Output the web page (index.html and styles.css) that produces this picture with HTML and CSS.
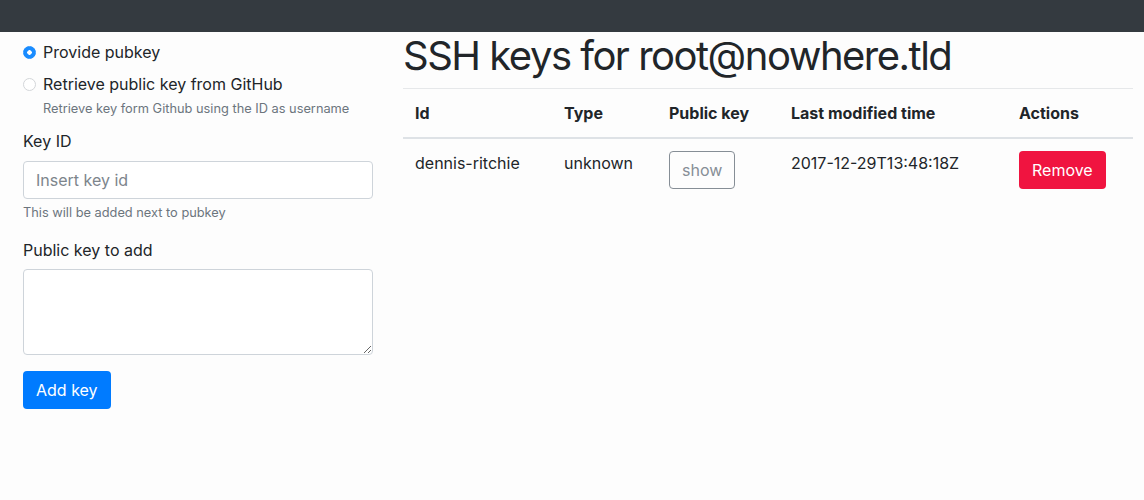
FILE: index.html
```html
<!DOCTYPE html>
<html lang="en">
<head>
    <meta charset="UTF-8">
    <meta name="viewport" content="width=device-width, initial-scale=1.0">
    <title>SSH keys for root@nowhere.tld</title>
    <link rel="stylesheet" href="styles.css">
</head>
<body>
    <nav class="topbar"></nav>

    <div class="page">
        <form class="key-form">
            <div class="radio-group">
                <label class="radio-row">
                    <input type="radio" name="source" value="pubkey" checked>
                    <span>Provide pubkey</span>
                </label>
                <label class="radio-row">
                    <input type="radio" name="source" value="github">
                    <span>Retrieve public key from GitHub</span>
                </label>
                <small class="help radio-help">Retrieve key form Github using the ID as username</small>
            </div>

            <div class="form-group">
                <label class="field-label" for="key-id">Key ID</label>
                <input class="field" type="text" id="key-id" placeholder="Insert key id">
                <small class="help">This will be added next to pubkey</small>
            </div>

            <div class="form-group">
                <label class="field-label" for="pubkey">Public key to add</label>
                <textarea class="field field-area" id="pubkey"></textarea>
            </div>

            <button type="button" class="btn btn-primary">Add key</button>
        </form>

        <main class="keys">
            <h1>SSH keys for root@nowhere.tld</h1>
            <table class="keys-table">
                <colgroup>
                    <col class="col-id">
                    <col class="col-type">
                    <col class="col-key">
                    <col class="col-time">
                    <col class="col-actions">
                </colgroup>
                <thead>
                    <tr>
                        <th>Id</th>
                        <th>Type</th>
                        <th>Public key</th>
                        <th>Last modified time</th>
                        <th>Actions</th>
                    </tr>
                </thead>
                <tbody>
                    <tr>
                        <td>dennis-ritchie</td>
                        <td>unknown</td>
                        <td><button type="button" class="btn btn-outline">show</button></td>
                        <td>2017-12-29T13:48:18Z</td>
                        <td><button type="button" class="btn btn-danger">Remove</button></td>
                    </tr>
                </tbody>
            </table>
        </main>
    </div>
</body>
</html>
```

FILE: styles.css
```css
body {
    margin: 0;
    font-family: Inter, "Noto Sans", sans-serif;
    font-size: 16px;
    line-height: 1.5;
    color: #212529;
    background-color: #fdfdfd;
}

.topbar {
    height: 32px;
    background-color: #343a40;
}

.page {
    display: grid;
    grid-template-columns: 350px 1fr;
    gap: 30px;
    padding: 0 11px 0 23px;
}

/* left form */
.key-form {
    padding-top: 8px;
}

.radio-group {
    display: flex;
    flex-direction: column;
    gap: 8px;
    margin-bottom: 10px;
}

.radio-row {
    display: flex;
    align-items: center;
    gap: 7px;
    cursor: pointer;
}

.radio-row input {
    appearance: none;
    -webkit-appearance: none;
    margin: 0;
    width: 13px;
    height: 13px;
    border: 1px solid #d3d6d9;
    border-radius: 50%;
    background: #fff;
}

.radio-row input:checked {
    border-color: #1a8cff;
    background: radial-gradient(circle, #fff 0 2px, #1a8cff 2.5px);
}

.help {
    display: block;
    font-size: 12.8px;
    line-height: 19.5px;
    color: #6c757d;
}

.radio-help {
    margin-top: -5px;
    padding-left: 20px;
}

.form-group {
    margin-bottom: 16px;
}

.field-label {
    display: block;
    margin-bottom: 8px;
}

.field {
    display: block;
    box-sizing: border-box;
    width: 100%;
    height: 38px;
    padding: 6px 12px;
    font: inherit;
    color: #495057;
    background: #fff;
    border: 1px solid #ced4da;
    border-radius: 4px;
}

.field::placeholder {
    color: #7d858c;
}

.field + .help {
    margin-top: 4px;
}

.field-label + .field-area {
    margin-top: -1px;
}

.field-area {
    height: 86px;
    resize: vertical;
}

/* buttons */
.btn {
    display: inline-block;
    box-sizing: border-box;
    height: 38px;
    padding: 6px 12px;
    font: inherit;
    border: 1px solid transparent;
    border-radius: 4px;
    cursor: pointer;
}

.btn-primary {
    color: #fff;
    background: #007bff;
}

.btn-danger {
    color: #fff;
    background: #f01440;
}

.btn-outline {
    color: #868e96;
    background: transparent;
    border-color: #868e96;
}

/* keys table */
.keys h1 {
    margin: 0 0 8px;
    font-size: 40px;
    font-weight: 400;
    line-height: 1.2;
    letter-spacing: -1.5px;
}

.keys-table {
    width: 100%;
    table-layout: fixed;
    border-collapse: collapse;
}

.col-id { width: 149px; }
.col-type { width: 105px; }
.col-key { width: 122px; }
.col-time { width: 228px; }
.col-actions { width: 126px; }

.keys-table th,
.keys-table td {
    padding: 12px;
    text-align: left;
    vertical-align: top;
    border-top: 1px solid #e6e8ea;
}

.keys-table th {
    font-weight: 700;
    border-bottom: 2px solid #dee2e6;
}

.keys-table tbody tr:first-child td {
    border-top: 0;
}
```
